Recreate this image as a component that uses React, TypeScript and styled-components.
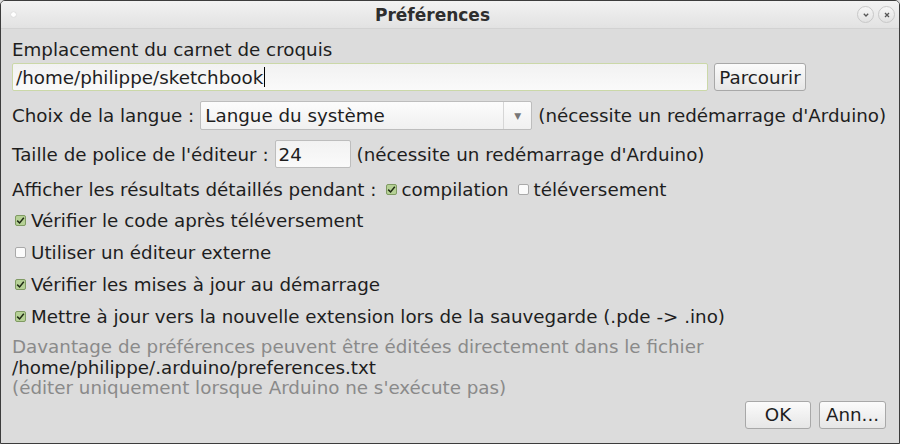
import React from "react";
import styled, { createGlobalStyle } from "styled-components";

const GlobalStyle = createGlobalStyle`
  html, body {
    margin: 0;
    padding: 0;
    background: #dcdcdc;
  }
  body {
    font-family: "DejaVu Sans", "Liberation Sans", sans-serif;
  }
`;

const Window = styled.div`
  width: 900px;
  height: 444px;
  box-sizing: border-box;
  border: 1px solid #3c3c3c;
  border-radius: 5px 5px 0 0;
  background: #dcdcdc;
  display: flex;
  flex-direction: column;
  overflow: hidden;
`;

const TitleBar = styled.div`
  height: 27px;
  flex: none;
  display: flex;
  align-items: center;
  padding: 0 4px 0 10px;
  background: linear-gradient(#f2f2f2, #e2e2e2);
  border-bottom: 1px solid #d2d2d2;
`;

const Title = styled.div`
  flex: 1;
  font-size: 17px;
  font-weight: bold;
  color: #2e2e2e;
  text-align: center;
  padding-right: 8px;
`;

const MenuDot = styled.div`
  width: 5px;
  height: 5px;
  border-radius: 50%;
  background: #ffffff;
  box-shadow: 0 0 1px #aaa;
`;

const TitleButtons = styled.div`
  display: flex;
  gap: 4px;
`;

const RoundButton = styled.div`
  width: 15px;
  height: 15px;
  border-radius: 50%;
  border: 1px solid #c8c8c8;
  background: linear-gradient(#f6f6f6, #e2e2e2);
  display: flex;
  align-items: center;
  justify-content: center;
`;

const Content = styled.div`
  flex: 1;
  display: flex;
  flex-direction: column;
  padding: 9px 12px 0 11px;
  font-size: 18.3px;
  color: #1e1e1e;
`;

const Label = styled.div`
  height: 24px;
  line-height: 24px;
`;

const Row = styled.div<{ $h: number; $mt?: number }>`
  display: flex;
  align-items: center;
  height: ${(p) => p.$h}px;
  margin-top: ${(p) => p.$mt ?? 0}px;
  gap: 6px;
  white-space: nowrap;
`;

const TextField = styled.div<{ $w: number; $focused?: boolean }>`
  width: ${(p) => p.$w}px;
  height: 28px;
  box-sizing: border-box;
  border: 1px solid ${(p) => (p.$focused ? "#cbd8a8" : "#bdbdbd")};
  border-radius: 2px;
  background: linear-gradient(#f2f2f2, #fafafa);
  display: flex;
  align-items: center;
  padding: 0 3px;
`;

const Caret = styled.span`
  display: inline-block;
  width: 1px;
  height: 20px;
  background: #000;
  margin-left: 1px;
`;

const PushButton = styled.button<{ $w: number }>`
  width: ${(p) => p.$w}px;
  height: 28px;
  box-sizing: border-box;
  border: 1px solid #a8a8a8;
  border-radius: 3px;
  background: linear-gradient(#fbfbfb, #e6e6e6);
  font-family: inherit;
  font-size: 18.3px;
  color: #1e1e1e;
  padding: 0;
  display: flex;
  align-items: center;
  justify-content: center;
`;

const Combo = styled.div`
  width: 332px;
  height: 29px;
  box-sizing: border-box;
  border: 1px solid #bdbdbd;
  border-radius: 2px;
  background: linear-gradient(#fcfcfc, #f0f0f0);
  display: flex;
  align-items: stretch;
`;

const ComboText = styled.div`
  flex: 1;
  display: flex;
  align-items: center;
  padding-left: 4px;
`;

const ComboArrow = styled.div`
  width: 27px;
  border-left: 1px solid #d6d6d6;
  display: flex;
  align-items: center;
  justify-content: center;
  color: #777;
  font-size: 9px;
`;

const CheckItem = styled.label`
  display: flex;
  align-items: center;
  gap: 5px;
`;

const Box = styled.span<{ $checked?: boolean }>`
  width: 11px;
  height: 11px;
  box-sizing: border-box;
  border: 1px solid ${(p) => (p.$checked ? "#7f9a62" : "#a9a9a9")};
  border-radius: 2px;
  background: ${(p) => (p.$checked ? "#b6d196" : "#fbfbfb")};
  display: flex;
  align-items: center;
  justify-content: center;
  margin-left: 3px;
`;

const InfoLine = styled.div<{ $muted?: boolean }>`
  height: 20.5px;
  line-height: 20px;
  color: ${(p) => (p.$muted ? "#8a8a8a" : "#1e1e1e")};
`;

const InfoBlock = styled.div`
  margin-top: 5px;
`;

const Footer = styled.div`
  display: flex;
  justify-content: flex-end;
  gap: 8px;
  margin-top: 2px;
  padding-right: 1px;
`;

const Check = ({ checked, children }: { checked?: boolean; children: React.ReactNode }) => (
  <CheckItem>
    <Box $checked={checked}>
      {checked && (
        <svg width="9" height="9" viewBox="0 0 9 9">
          <path d="M1.2 4.6 L3.6 7 L7.8 1.8" fill="none" stroke="#1f2a14" strokeWidth="1.5" />
        </svg>
      )}
    </Box>
    <span>{children}</span>
  </CheckItem>
);

export default function App() {
  return (
    <>
      <GlobalStyle />
      <Window>
        <TitleBar>
          <MenuDot />
          <Title>Préférences</Title>
          <TitleButtons>
            <RoundButton>
              <svg width="8" height="8" viewBox="0 0 8 8">
                <path d="M1.8 2.8 L4 5 L6.2 2.8" fill="none" stroke="#555" strokeWidth="1.3" />
              </svg>
            </RoundButton>
            <RoundButton>
              <svg width="8" height="8" viewBox="0 0 8 8">
                <path d="M2 2 L6 6 M6 2 L2 6" fill="none" stroke="#555" strokeWidth="1.3" />
              </svg>
            </RoundButton>
          </TitleButtons>
        </TitleBar>
        <Content>
          <Label>Emplacement du carnet de croquis</Label>
          <Row $h={28} $mt={1}>
            <TextField $w={696} $focused>
              /home/philippe/sketchbook
              <Caret />
            </TextField>
            <PushButton $w={92}>Parcourir</PushButton>
          </Row>
          <Row $h={29} $mt={10}>
            <span>Choix de la langue :</span>
            <Combo>
              <ComboText>Langue du système</ComboText>
              <ComboArrow>▼</ComboArrow>
            </Combo>
            <span>(nécessite un redémarrage d'Arduino)</span>
          </Row>
          <Row $h={28} $mt={10}>
            <span>Taille de police de l'éditeur :</span>
            <TextField $w={76}>24</TextField>
            <span>(nécessite un redémarrage d'Arduino)</span>
          </Row>
          <Row $h={28} $mt={7}>
            <span>Afficher les résultats détaillés pendant :</span>
            <Check checked>compilation</Check>
            <Check>téléversement</Check>
          </Row>
          <Row $h={32} $mt={1}>
            <Check checked>Vérifier le code après téléversement</Check>
          </Row>
          <Row $h={32}>
            <Check>Utiliser un éditeur externe</Check>
          </Row>
          <Row $h={32}>
            <Check checked>Vérifier les mises à jour au démarrage</Check>
          </Row>
          <Row $h={32}>
            <Check checked>Mettre à jour vers la nouvelle extension lors de la sauvegarde (.pde -&gt; .ino)</Check>
          </Row>
          <InfoBlock>
            <InfoLine $muted>Davantage de préférences peuvent être éditées directement dans le fichier</InfoLine>
            <InfoLine>/home/philippe/.arduino/preferences.txt</InfoLine>
            <InfoLine $muted>(éditer uniquement lorsque Arduino ne s'exécute pas)</InfoLine>
          </InfoBlock>
          <Footer>
            <PushButton $w={66}>OK</PushButton>
            <PushButton $w={67}>Ann...</PushButton>
          </Footer>
        </Content>
      </Window>
    </>
  );
}
